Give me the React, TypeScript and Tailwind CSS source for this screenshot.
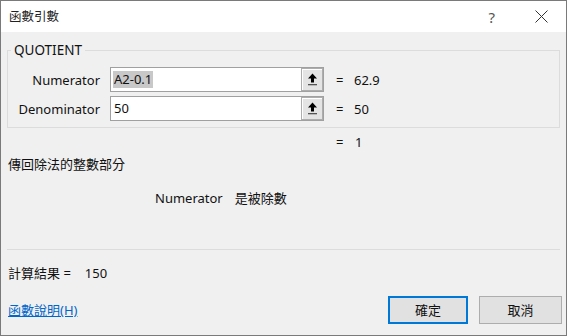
import React from "react";

const UpArrow: React.FC = () => (
  <svg width="11" height="13" viewBox="0 0 11 13">
    <path d="M5.5 0.5 L10 5.5 H7 V9.5 H4 V5.5 H1 Z" fill="#000" />
    <rect x="1" y="11" width="9" height="1.3" fill="#555" />
  </svg>
);

const ArgRow: React.FC<{ label: string; value: string; result: string; selected?: boolean }> = ({
  label,
  value,
  result,
  selected,
}) => (
  <div className="flex items-center h-[25px]">
    <div className="w-[92px] text-right">{label}</div>
    <div className="ml-[10px] flex h-[25px] w-[214px] border border-[#a0a0a0] bg-white">
      <div className="flex-1 flex items-center pl-[2px]">
        <span className={selected ? "bg-[#c8c8c8] px-px leading-[17px]" : "px-px leading-[17px]"}>{value}</span>
      </div>
      <div className="w-[22px] flex items-center justify-center bg-[#e4e4e4] border border-[#adadad] shadow-[inset_1px_1px_0_#fff]">
        <UpArrow />
      </div>
    </div>
    <span className="ml-[12px] w-[18px]">=</span>
    <span>{result}</span>
  </div>
);

const App: React.FC = () => {
  return (
    <div
      className="w-[567px] h-[336px] border border-[#7a7a7a] bg-[#f0f0f0] flex flex-col text-[13px] text-[#111] leading-[18px]"
      style={{ fontFamily: '"Noto Sans", "Noto Sans CJK TC", sans-serif' }}
    >
      {/* Title bar */}
      <div className="h-[31px] bg-white flex items-center pl-[8px] text-[12.5px] text-[#222]">
        <span>函數引數</span>
        <span className="ml-auto text-[15px] text-[#555] mr-[40px]">?</span>
        <svg width="13" height="13" viewBox="0 0 13 13" className="mr-[18px]">
          <path d="M0.5 0.5 L12.5 12.5 M12.5 0.5 L0.5 12.5" stroke="#333" strokeWidth="1" />
        </svg>
      </div>

      {/* Body */}
      <div className="flex-1 flex flex-col px-[6px]">
        <fieldset className="mt-[9px] border border-[#dcdcdc] pb-[6px] flex flex-col gap-[4px]">
          <legend className="ml-[3px] px-[3px] mb-[8px] text-[13.5px]">QUOTIENT</legend>
          <ArgRow label="Numerator" value="A2-0.1" result="62.9" selected />
          <ArgRow label="Denominator" value="50" result="50" />
        </fieldset>

        <div className="mt-[5px] flex">
          <span className="ml-[329px] w-[19px]">=</span>
          <span>1</span>
        </div>

        <div className="mt-[4px] pl-px">傳回除法的整數部分</div>

        <div className="mt-[16px] flex pl-[148px]">
          <span>Numerator</span>
          <span className="ml-[12px]">是被除數</span>
        </div>

        <div className="mt-[42px] h-px bg-[#dcdcdc]" />

        <div className="mt-[14px] flex pl-px">
          <span>計算結果 =</span>
          <span className="ml-[14px]">150</span>
        </div>

        <div className="mt-[14px] flex items-center -mr-[2px]">
          <a href="#" className="text-[#0066cc] underline pl-px">
            函數說明(H)
          </a>
          <button className="ml-auto w-[80px] h-[28px] bg-[#e1e1e1] border-2 border-[#0078d7]">確定</button>
          <button className="ml-[11px] w-[83px] h-[28px] bg-[#e1e1e1] border border-[#adadad]">取消</button>
        </div>
      </div>
    </div>
  );
};

export default App;
